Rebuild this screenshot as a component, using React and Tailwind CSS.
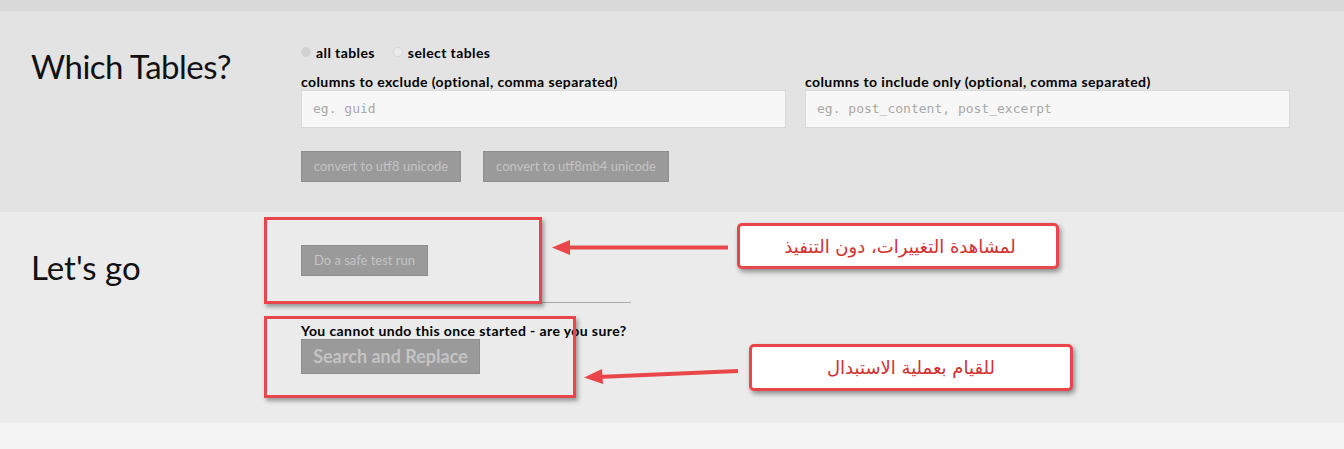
import React from "react";

const sans = { fontFamily: "Lato, 'Open Sans', sans-serif" };

/* ── Pieces ───────────────────────────────────── */

function Radio({ label, checked }) {
  return (
    <label className="flex items-center gap-[5px] text-[14px] tracking-[0.4px] font-bold text-black">
      <span
        className={`w-[10px] h-[10px] rounded-full border border-[#d6d6d6] ${
          checked ? "bg-[#d0d0d0]" : "bg-[#ececec]"
        }`}
      />
      {label}
    </label>
  );
}

function Field({ label, placeholder }) {
  return (
    <div className="flex-1 flex flex-col">
      <div className="text-[14px] tracking-[0.4px] font-bold text-black leading-[16px] h-[16px]">
        {label}
      </div>
      <div className="h-[38px] bg-[#f7f7f7] border border-[#dadada] flex items-center px-[11px]">
        <span
          className="text-[13px] text-[#a8a8a8]"
          style={{ fontFamily: "'DejaVu Sans Mono', monospace" }}
        >
          {placeholder}
        </span>
      </div>
    </div>
  );
}

function GrayButton({ children, className = "" }) {
  return (
    <button
      className={`bg-[#9a9a9a] border border-[#8d8d8d] text-[#c4c4c4] ${className}`}
    >
      {children}
    </button>
  );
}

function Arrow({ x, y, w, h, d, head }) {
  return (
    <svg
      className="absolute"
      style={{ left: x, top: y }}
      width={w}
      height={h}
      viewBox={`0 0 ${w} ${h}`}
    >
      <path d={d} stroke="#e8464a" strokeWidth="4" fill="none" />
      <polygon points={head} fill="#e8464a" />
    </svg>
  );
}

/* ── Page ─────────────────────────────────────── */

export default function App() {
  return (
    <div className="relative w-[1344px] h-[449px] overflow-hidden" style={sans}>
      <div className="h-[11px] bg-[#dadada]" />

      {/* Which Tables */}
      <section className="h-[201px] bg-[#e3e3e3] flex">
        <div className="w-[301px] pl-[31px] pt-[35px]">
          <h2 className="text-[33px] text-[#111] leading-[40px] tracking-[-0.5px]">
            Which Tables?
          </h2>
        </div>
        <div className="flex-1 pr-[54px] pt-[33px]">
          <div className="flex gap-[18px] h-[16px]">
            <Radio label="all tables" checked />
            <Radio label="select tables" />
          </div>
          <div className="flex gap-[19px] mt-[14px]">
            <Field
              label="columns to exclude (optional, comma separated)"
              placeholder="eg. guid"
            />
            <Field
              label="columns to include only (optional, comma separated)"
              placeholder="eg. post_content, post_excerpt"
            />
          </div>
          <div className="flex gap-[22px] mt-[23px]">
            <GrayButton className="w-[160px] h-[31px] text-[13px]">
              convert to utf8 unicode
            </GrayButton>
            <GrayButton className="w-[186px] h-[31px] text-[13px]">
              convert to utf8mb4 unicode
            </GrayButton>
          </div>
        </div>
      </section>

      {/* Let's go */}
      <section className="h-[211px] bg-[#ebebeb] flex">
        <div className="w-[301px] pl-[31px] pt-[35px]">
          <h2 className="text-[33px] text-[#111] leading-[40px]">Let's go</h2>
        </div>
        <div className="flex-1 pt-[33px]">
          <GrayButton className="w-[127px] h-[31px] text-[13px]">
            Do a safe test run
          </GrayButton>
          <div className="w-[330px] h-px bg-[#a8a8a8] mt-[26px]" />
          <div className="mt-[20px] text-[14px] tracking-[0.4px] font-bold text-black leading-[16px]">
            You cannot undo this once started - are you sure?
          </div>
          <GrayButton className="w-[179px] h-[35px] text-[18px] font-bold">
            Search and Replace
          </GrayButton>
        </div>
      </section>

      <div className="h-[26px] bg-[#f4f4f4]" />

      {/* Annotations */}
      <div className="absolute left-[264px] top-[217px] w-[278px] h-[87px] border-[3px] border-[#e8464a] shadow-[2px_3px_4px_rgba(0,0,0,0.35)]" />
      <div className="absolute left-[264px] top-[316px] w-[312px] h-[82px] border-[3px] border-[#e8464a] shadow-[2px_3px_4px_rgba(0,0,0,0.35)]" />

      <Arrow
        x={552}
        y={238}
        w={180}
        h={20}
        d="M14 9.5 L176 9.5"
        head="0,9.5 18,2 18,17"
      />
      <Arrow
        x={584}
        y={362}
        w={156}
        h={24}
        d="M14 15 L154 9"
        head="0,15.5 18,7 19,22"
      />

      <div
        className="absolute left-[737px] top-[223px] w-[322px] h-[46px] bg-white border-[3px] border-[#e8464a] rounded-[5px] shadow-[2px_3px_5px_rgba(0,0,0,0.4)] flex items-center justify-center pl-[4px] text-[18px] text-[#d2302f]"
        style={{ fontFamily: "'DejaVu Sans', sans-serif" }}
        dir="rtl"
      >
        لمشاهدة التغييرات، دون التنفيذ
      </div>
      <div
        className="absolute left-[749px] top-[344px] w-[324px] h-[47px] bg-white border-[3px] border-[#e8464a] rounded-[5px] shadow-[2px_3px_5px_rgba(0,0,0,0.4)] flex items-center justify-center text-[18px] text-[#d2302f]"
        style={{ fontFamily: "'DejaVu Sans', sans-serif" }}
        dir="rtl"
      >
        للقيام بعملية الاستبدال
      </div>
    </div>
  );
}
